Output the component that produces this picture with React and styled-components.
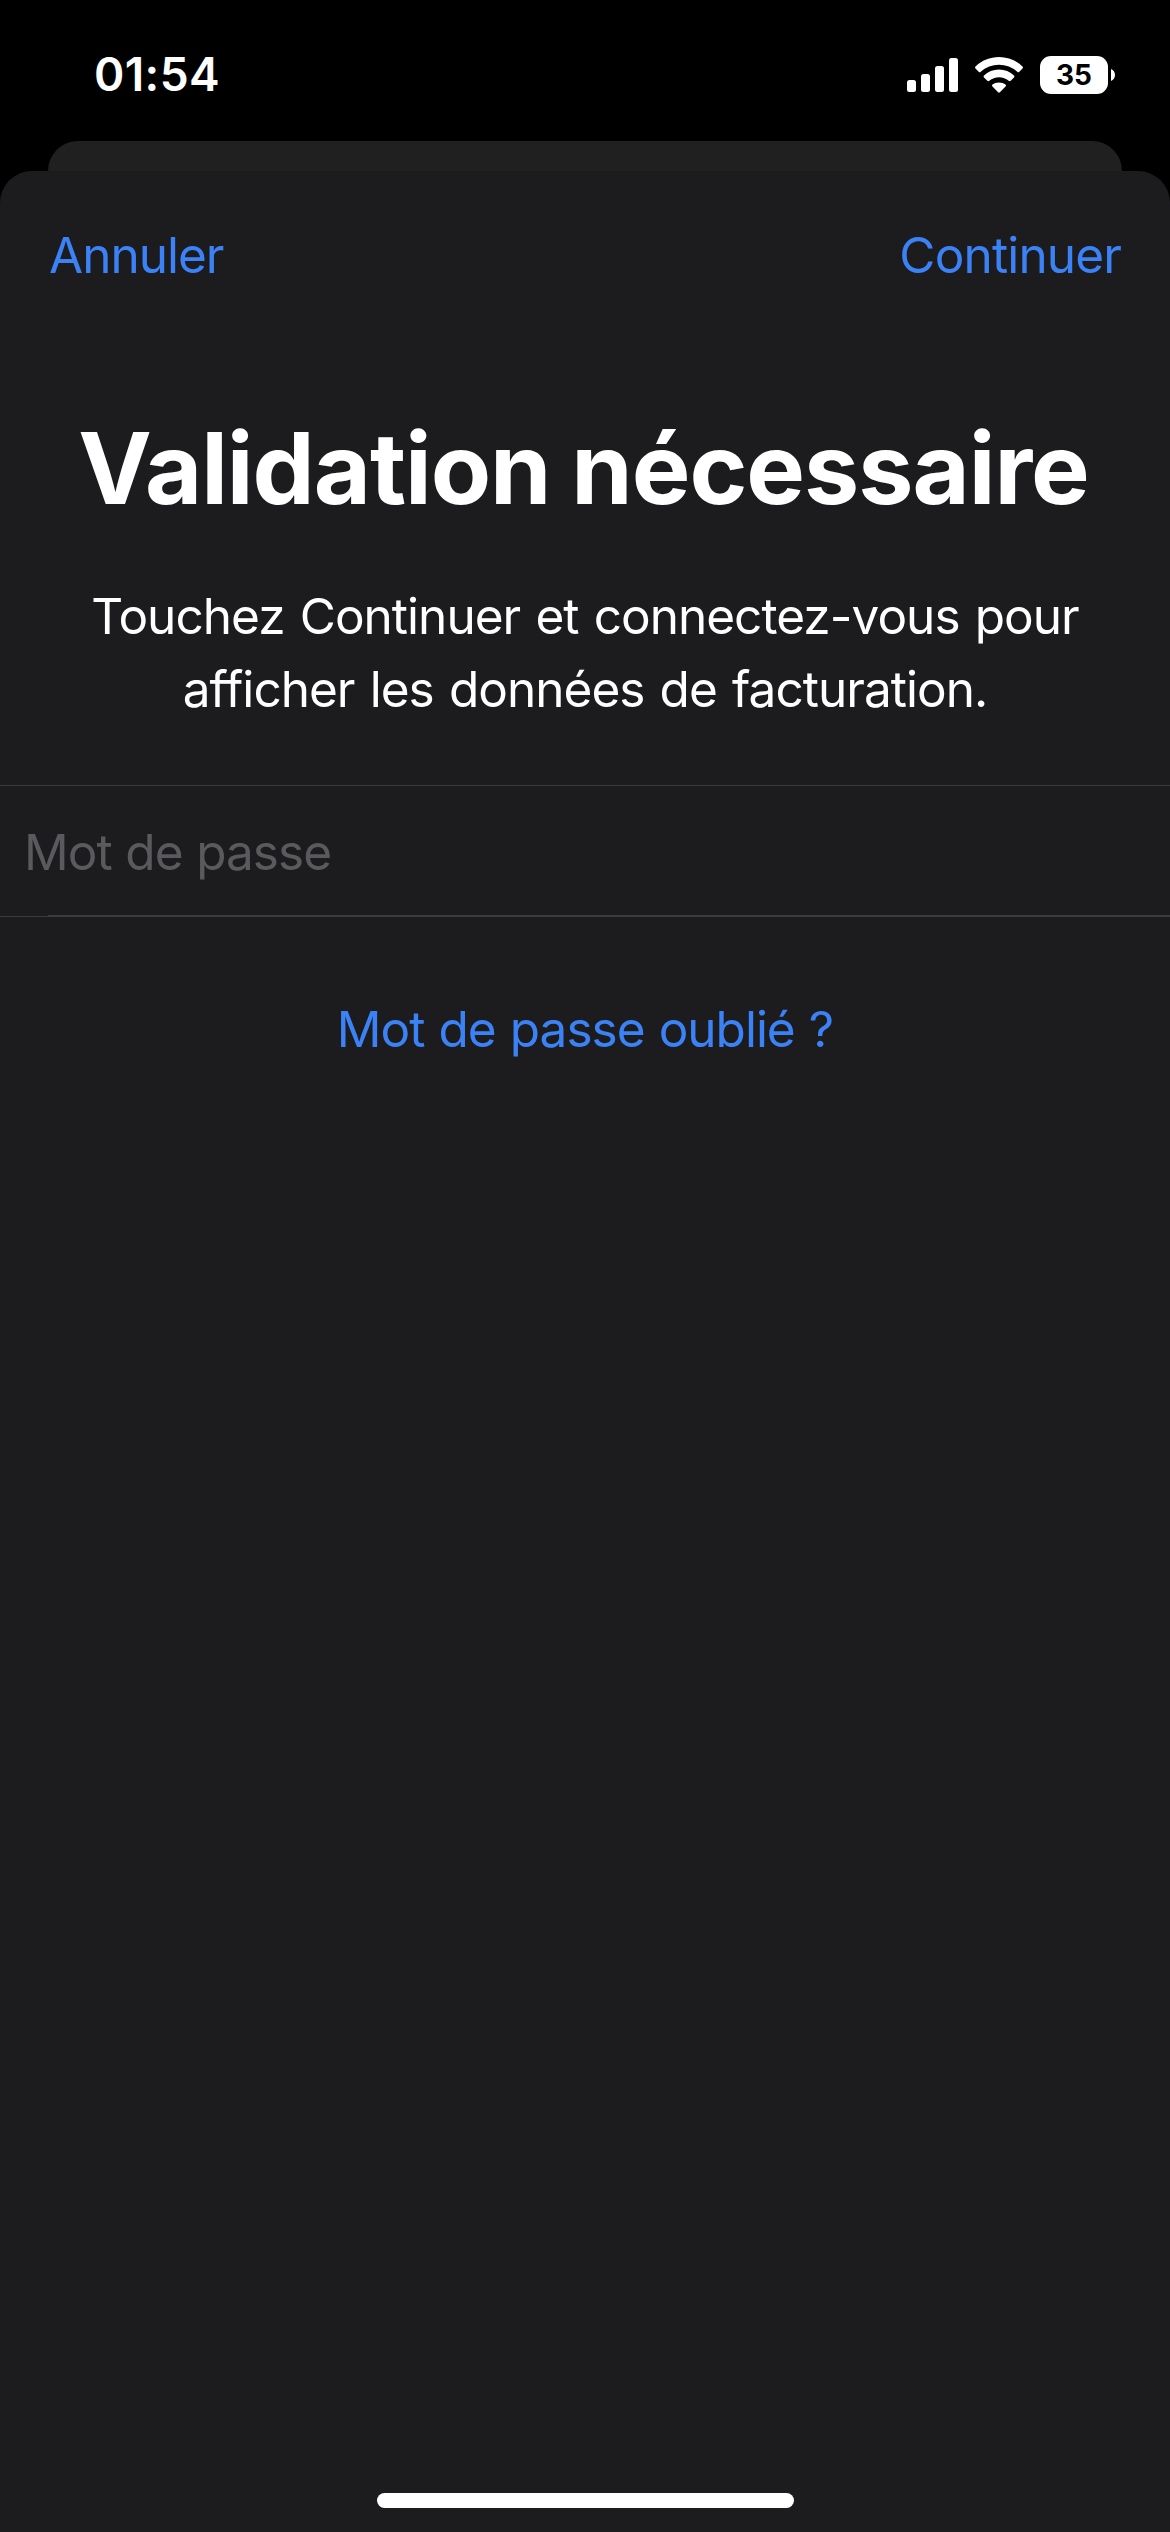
import React from "react";
import styled, { createGlobalStyle } from "styled-components";

const GlobalStyle = createGlobalStyle`
  * { box-sizing: border-box; }
  body {
    margin: 0;
    background: #000;
    font-family: Inter, "Liberation Sans", sans-serif;
    -webkit-font-smoothing: antialiased;
  }
`;

const Screen = styled.div`
  display: flex;
  flex-direction: column;
  width: 1170px;
  height: 2532px;
  background: #000;
  overflow: hidden;
`;

const StatusBar = styled.header`
  display: flex;
  justify-content: space-between;
  align-items: center;
  height: 141px;
  padding: 8px 55px 0 94px;
  flex: none;
`;

const Time = styled.time`
  font-size: 46px;
  font-weight: 600;
  line-height: 60px;
  letter-spacing: 0.4px;
  color: #fff;
  margin-bottom: 1px;
`;

const StatusIcons = styled.div`
  display: flex;
  align-items: center;
  height: 38px;
`;

const Signal = styled.svg`
  display: block;
  margin-right: 17px;
`;

const Wifi = styled.svg`
  display: block;
  margin-right: 17px;
`;

const Battery = styled.div`
  display: flex;
  align-items: center;
  gap: 3px;
`;

const BatteryBody = styled.div`
  width: 68px;
  height: 38px;
  border-radius: 11px;
  background: #fff;
  color: #000;
  font-size: 28px;
  font-weight: 700;
  line-height: 38px;
  text-align: center;
`;

const BackSheet = styled.div`
  flex: none;
  height: 30px;
  margin: 0 48px;
  border-radius: 30px 30px 0 0;
  background: #202021;
`;

const Sheet = styled.main`
  flex: 1;
  display: flex;
  flex-direction: column;
  align-items: center;
  border-radius: 32px 32px 0 0;
  background: #1c1c1e;
`;

const NavBar = styled.nav`
  display: flex;
  justify-content: space-between;
  align-items: center;
  align-self: stretch;
  height: 168px;
  padding: 0 49px;
`;

const TextButton = styled.button`
  padding: 0;
  border: 0;
  background: none;
  color: #3b82f7;
  font: 400 49.5px/60px Inter, "Liberation Sans", sans-serif;
  letter-spacing: ${(p) => p.$tracking || "-1px"};
  word-spacing: 1.2px;
  white-space: nowrap;
`;

const Title = styled.h1`
  margin: 69px 3px 0 0;
  color: #fff;
  font-size: 98.6px;
  font-weight: 700;
  line-height: 120px;
  letter-spacing: -1.02px;
  word-spacing: -1.5px;
  white-space: nowrap;
`;

const Message = styled.p`
  margin: 52px 0 59px;
  color: #fff;
  font-size: 49.5px;
  line-height: 73px;
  letter-spacing: -0.97px;
  word-spacing: 2.2px;
  text-align: center;
`;

const MessageLine = styled.span`
  display: block;
  white-space: nowrap;
`;

const Field = styled.label`
  display: flex;
  flex-direction: column;
  align-self: stretch;
  height: 132px;
  border-top: 1px solid #3b3b3e;
  border-bottom: 1px solid #3b3b3e;
  margin-bottom: 82px;
`;

const PasswordInput = styled.input`
  flex: 1;
  min-height: 0;
  padding: 2px 25px 0 24px;
  border: 0;
  outline: 0;
  background: transparent;
  color: #fff;
  font: 400 49.5px/60px Inter, "Liberation Sans", sans-serif;
  letter-spacing: -0.95px;
  word-spacing: 0.6px;
  &::placeholder {
    color: #5a5a5e;
    opacity: 1;
  }
`;

const RowSeparator = styled.div`
  height: 1px;
  margin-left: 48px;
  background: #3b3b3e;
`;

const HomeIndicator = styled.div`
  width: 417px;
  height: 15px;
  margin: auto 0 24px 1px;
  border-radius: 8px;
  background: #fff;
`;

export default function App() {
  return (
    <Screen>
      <GlobalStyle />
      <StatusBar>
        <Time>01:54</Time>
        <StatusIcons>
          <Signal width="51" height="34" viewBox="0 0 51 34" fill="#fff">
            <rect x="0" y="22" width="9" height="12" rx="2.5" />
            <rect x="14" y="16" width="9" height="18" rx="2.5" />
            <rect x="28" y="8" width="9" height="26" rx="2.5" />
            <rect x="42" y="0" width="9" height="34" rx="2.5" />
          </Signal>
          <Wifi width="48" height="36" viewBox="0 0 48 36" fill="#fff">
            <path d="M24 0C33 0 41.200 3.500 47.500 9.500Q48.400 10.500 47.500 11.500L44.300 14.800Q43.300 15.800 42.300 14.800A27 27 0 0 0 5.700 14.800Q4.700 15.800 3.700 14.800L0.500 11.500Q-0.400 10.500 0.500 9.500C6.800 3.500 15 0 24 0Z" />
            <path d="M24 12.600C29.800 12.600 35.100 14.800 39 18.500Q40 19.500 39 20.500L35.700 23.800Q34.700 24.700 33.700 23.800A14.800 14.800 0 0 0 14.300 23.800Q13.300 24.700 12.300 23.800L9 20.500Q8 19.500 9 18.500C12.900 14.800 18.200 12.600 24 12.600Z" />
            <path d="M24 25.400C26.700 25.400 28.800 26.200 30.500 27.600Q31.500 28.500 30.500 29.500L24.900 35.200Q24 36.100 23.100 35.200L17.500 29.500Q16.500 28.500 17.500 27.600C19.200 26.200 21.300 25.400 24 25.400Z" />
          </Wifi>
          <Battery>
            <BatteryBody>35</BatteryBody>
            <svg width="4" height="12" viewBox="0 0 4 12" fill="#fff">
              <path d="M0 0C2.400 1 4 3.300 4 6S2.400 11 0 12Z" />
            </svg>
          </Battery>
        </StatusIcons>
      </StatusBar>
      <BackSheet />
      <Sheet>
        <NavBar>
          <TextButton>Annuler</TextButton>
          <TextButton $tracking="-0.85px">Continuer</TextButton>
        </NavBar>
        <Title>Validation nécessaire</Title>
        <Message>
          <MessageLine>Touchez Continuer et connectez-vous pour</MessageLine>
          <MessageLine>afficher les données de facturation.</MessageLine>
        </Message>
        <Field>
          <PasswordInput type="password" placeholder="Mot de passe" />
          <RowSeparator />
        </Field>
        <TextButton>Mot de passe oublié ?</TextButton>
        <HomeIndicator />
      </Sheet>
    </Screen>
  );
}
